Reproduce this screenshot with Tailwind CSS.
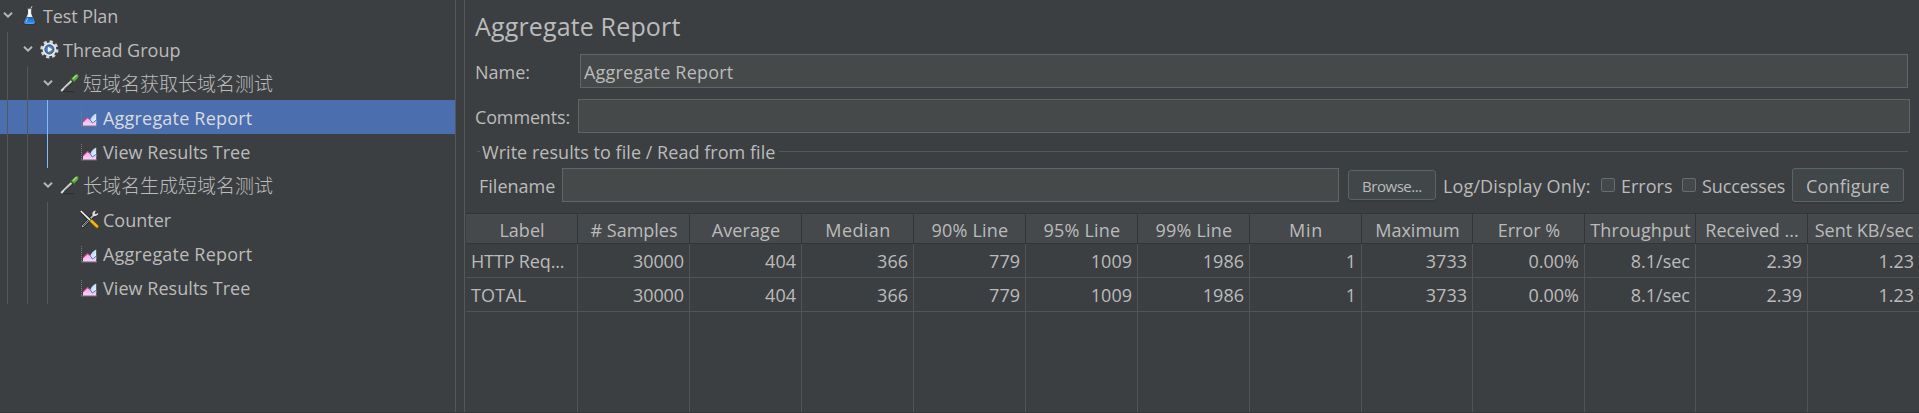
<!DOCTYPE html>
<html lang="en">
<head>
<meta charset="utf-8">
<title>Test Plan</title>
<script src="https://cdn.jsdelivr.net/npm/@tailwindcss/browser@4"></script>
</head>
<body class="bg-[#3c3f41]">
<svg class="absolute size-0">
  <defs>
    <linearGradient id="gGlass" x1="0" x2="1" y1="0" y2="0"><stop offset="0" stop-color="#8fa3b5"/><stop offset=".5" stop-color="#ffffff"/><stop offset="1" stop-color="#a8b6c4"/></linearGradient>
    <linearGradient id="gLiquid" x1="0" x2="0" y1="0" y2="1"><stop offset="0" stop-color="#1c5fb8"/><stop offset="1" stop-color="#2f9bff"/></linearGradient>
    <linearGradient id="gSky" x1="0" x2="1" y1="0" y2="1"><stop offset="0" stop-color="#8ec2ef"/><stop offset="1" stop-color="#ffffff"/></linearGradient>
    <linearGradient id="gPink" x1="0" x2="0" y1="0" y2="1"><stop offset="0" stop-color="#f5a8e6"/><stop offset="1" stop-color="#fbd0f6"/></linearGradient>
    <radialGradient id="gCore"><stop offset="0" stop-color="#9ec2ee"/><stop offset="1" stop-color="#2c5c9e"/></radialGradient>
  </defs>
  <symbol id="chevron" viewBox="0 0 10 8"><path d="M1 1.8 L5 5.6 L9 1.8" fill="none" stroke="#b4b7b9" stroke-width="2"/></symbol>
  <symbol id="flask" viewBox="0 0 20 20">
    <ellipse cx="9.5" cy="18.6" rx="6.6" ry="1" fill="#2a2d2f"/>
    <path d="M8 4 h3.2 v4.5 L14.6 17 Q15 18.6 13.4 18.7 H5.6 Q4 18.6 4.4 17 L8 8.5z" fill="url(#gGlass)"/>
    <path d="M6.6 12 H12.6 L14.6 17 Q15 18.6 13.4 18.7 H5.6 Q4 18.6 4.4 17z" fill="url(#gLiquid)"/>
    <path d="M7.8 4.2 h3.6 M11 3.4 L12 1.2" stroke="#c7ccd0" stroke-width="1" fill="none"/>
    <path d="M7.6 13 L6.2 17" stroke="#8fcaff" stroke-width="1"/>
  </symbol>
  <symbol id="gear" viewBox="0 0 20 20">
    <circle cx="9.4" cy="10.4" r="7.7" fill="none" stroke="#d3d5d7" stroke-width="2.8" stroke-dasharray="3.2 2.848"/>
    <circle cx="9.4" cy="10.4" r="6.9" fill="#e6e7e9"/>
    <circle cx="9.4" cy="10.4" r="4.6" fill="url(#gCore)" stroke="#39597f" stroke-width=".9"/>
    <path d="M8 7.8 L12.2 10.4 L8 13z" fill="#f2f7ff"/>
  </symbol>
  <symbol id="dropper" viewBox="0 0 20 20">
    <path d="M3 18.6 H14" stroke="#26292b" stroke-width="1.2" opacity=".7"/>
    <path d="M1.4 17.6 L3.2 14.2 L11 6.4 L13.6 9 L5.8 16.4z" fill="#2b2e30"/>
    <path d="M1.2 18 L4.2 15 L11.6 7.8" fill="none" stroke="#d6d9da" stroke-width="2"/>
    <path d="M4 15.8 L12.4 8.6" fill="none" stroke="#7d8184" stroke-width=".9"/>
    <path d="M10 5 L14.8 9.8" stroke="#2f5f1e" stroke-width="1.8"/>
    <path d="M11.4 6 L13.8 3.2 Q16.4 .6 18 1.6 Q19.2 3 17.4 5.6 L14.4 8.6z" fill="#5fa83f"/>
    <path d="M13.2 5.4 L16.2 2.6" stroke="#a9dc8c" stroke-width="1.4" stroke-linecap="round"/>
  </symbol>
  <symbol id="chart" viewBox="0 0 20 20">
    <path d="M1.5 3 V19" stroke="#77797b" stroke-width="1" stroke-dasharray="1 1"/>
    <path d="M1 18.9 H17" stroke="#7d7f81" stroke-width="1"/>
    <path d="M9.6 15.6 Q10.2 9.4 16.2 6.6 V16z" fill="url(#gSky)"/>
    <path d="M3 18.4 V15 L7.6 10.4 L10 12.4 L12.4 16 L16.2 13.6 V18.4z" fill="url(#gPink)"/>
    <path d="M3 14.8 L7.4 10.6 L9.8 12.2" fill="none" stroke="#d2418c" stroke-width="1.1"/>
    <path d="M9.8 12.2 L12.4 16 L16.2 13.2" fill="none" stroke="#4b7fc4" stroke-width="1"/>
  </symbol>
  <symbol id="tools" viewBox="0 0 20 20">
    <path d="M2.6 17.4 L13.6 6.4" stroke="#222426" stroke-width="3.6" stroke-linecap="round"/>
    <path d="M2.6 17.4 L13.6 6.4" stroke="#b3b6b8" stroke-width="1.8" stroke-linecap="round"/>
    <path d="M3 17 L11 9" stroke="#3b3e40" stroke-width=".9"/>
    <path d="M15.8 1.6 Q12 2 12.4 6 Q14 8.6 18 5.6 L18.2 4 L15.6 5.2 L14.6 4.2z" fill="#dfe1e2"/>
    <path d="M1 2.4 L10.2 11.4" stroke="#222426" stroke-width="3"/>
    <path d="M.8 2 L10.4 11.4" stroke="#f0f1f2" stroke-width="1.7"/>
    <path d="M11.4 12 L17.2 17.6" stroke="#7a5600" stroke-width="3.6" stroke-linecap="round"/>
    <path d="M11.4 12 L17 17.4" stroke="#f5b80e" stroke-width="2.5" stroke-linecap="round"/>
  </symbol>
</svg>

<div class="flex h-[413px] w-[1919px] overflow-hidden border-b border-[#333638] bg-[#3c3f41] font-['Open_Sans','Noto_Sans_CJK_SC',sans-serif] text-[18px] whitespace-nowrap text-[#bbbbbb]">

  <!-- Test tree -->
  <nav class="relative w-[456px] shrink-0 border-r border-[#555759]">
    <ul class="-mt-0.5 leading-[36px]">
      <li class="flex h-[34px] items-center pl-[3px]"><svg class="h-2 w-[10px] shrink-0"><use href="#chevron"/></svg><svg class="ml-[7px] size-5 shrink-0"><use href="#flask"/></svg><span class="ml-[3px] h-[34px] tracking-[-0.1px]">Test Plan</span></li>
      <li class="flex h-[34px] items-center pl-[23px]"><svg class="h-2 w-[10px] shrink-0"><use href="#chevron"/></svg><svg class="ml-[7px] size-5 shrink-0"><use href="#gear"/></svg><span class="ml-[3px] h-[34px]">Thread Group</span></li>
      <li class="flex h-[34px] items-center pl-[43px]"><svg class="h-2 w-[10px] shrink-0"><use href="#chevron"/></svg><svg class="ml-[7px] size-5 shrink-0"><use href="#dropper"/></svg><span class="ml-[3px] h-[34px] text-[19px] leading-[37px] font-light">短域名获取长域名测试</span></li>
      <li class="flex h-[34px] items-center bg-[#4b6eaf] pl-20"><svg class="size-5 shrink-0"><use href="#chart"/></svg><span class="ml-[3px] h-[34px] tracking-[0.2px] text-[#d8dbe0]">Aggregate Report</span></li>
      <li class="flex h-[34px] items-center pl-20"><svg class="size-5 shrink-0"><use href="#chart"/></svg><span class="ml-[3px] h-[34px] tracking-[0.05px]">View Results Tree</span></li>
      <li class="flex h-[34px] items-center pl-[43px]"><svg class="h-2 w-[10px] shrink-0"><use href="#chevron"/></svg><svg class="ml-[7px] size-5 shrink-0"><use href="#dropper"/></svg><span class="ml-[3px] h-[34px] text-[19px] leading-[37px] font-light">长域名生成短域名测试</span></li>
      <li class="flex h-[34px] items-center pl-20"><svg class="size-5 shrink-0"><use href="#tools"/></svg><span class="ml-[3px] h-[34px]">Counter</span></li>
      <li class="flex h-[34px] items-center pl-20"><svg class="size-5 shrink-0"><use href="#chart"/></svg><span class="ml-[3px] h-[34px] tracking-[0.2px]">Aggregate Report</span></li>
      <li class="flex h-[34px] items-center pl-20"><svg class="size-5 shrink-0"><use href="#chart"/></svg><span class="ml-[3px] h-[34px] tracking-[0.05px]">View Results Tree</span></li>
    </ul>
    <!-- Indent guides over the rows -->
    <i class="absolute top-8 left-[7px] h-[272px] w-px bg-[#555759]"></i>
    <i class="absolute top-[66px] left-[27px] h-[238px] w-px bg-[#555759]"></i>
    <i class="absolute top-[100px] left-[47px] h-[68px] w-px bg-[#7cbdfa]"></i>
    <i class="absolute top-[202px] left-[47px] h-[102px] w-px bg-[#555759]"></i>
  </nav>

  <!-- Report panel -->
  <main class="ml-2 flex w-[1455px] shrink-0 flex-col border-l border-[#555759]">
    <h1 class="h-[54px] pl-[10px] text-[25px] leading-[53px] tracking-[0.15px]">Aggregate Report</h1>

    <div class="flex h-[34px] pl-[10px] leading-[36px]">
      <label class="w-[105px]">Name:</label>
      <div class="h-[34px] w-[1328px] border border-[#646464] bg-[#45494a] pl-[3px] leading-[34px] tracking-[0.2px]">Aggregate Report</div>
    </div>
    <div class="mt-[11px] flex h-[34px] pl-[10px] leading-[36px]">
      <label class="w-[103px] tracking-[-0.15px]">Comments:</label>
      <div class="h-[34px] w-[1332px] border border-[#646464] bg-[#45494a]"></div>
    </div>

    <div class="mt-[5px] flex h-[27px] w-[1443px] items-center pl-3">
      <i class="h-px w-[3px] bg-[#555759]"></i>
      <span class="ml-[2px] h-[27px] leading-[29px] tracking-[0.04px]">Write results to file / Read from file</span>
      <i class="ml-1 h-px grow bg-[#555759]"></i>
    </div>

    <div class="mt-[3px] flex h-[34px] pl-[14px] leading-[36px]">
      <label class="w-[83px]">Filename</label>
      <div class="h-[34px] w-[777px] border border-[#646464] bg-[#45494a]"></div>
      <div class="mt-0.5 ml-[9px] h-[30px] w-[88px] rounded-[3px] border border-[#5e6263] bg-[#414749] pl-[13px] text-[15px] leading-[30px] tracking-[-0.45px] shadow-[0_2px_0_#363a3b]">Browse...</div>
      <span class="ml-[7px] w-[158px] tracking-[0.13px]">Log/Display Only:</span>
      <i class="mt-[10px] size-[14px] rounded-[2px] border border-[#6b6b6b] bg-[#43494a]"></i>
      <span class="ml-[6px] w-[61px]">Errors</span>
      <i class="mt-[10px] size-[14px] rounded-[2px] border border-[#6b6b6b] bg-[#43494a]"></i>
      <span class="ml-[6px] w-[90px] tracking-[-0.1px]">Successes</span>
      <div class="h-[34px] w-[112px] rounded-[3px] border border-[#5e6263] bg-[#414749] pl-[13px] leading-[34px] tracking-[0.2px] shadow-[0_2px_0_#363a3b]">Configure</div>
    </div>

    <div class="mt-[11px] ml-px flex grow flex-col">
      <div class="grid h-[31px] shrink-0 grid-cols-[repeat(8,112px)_111px_112px_111px_112px_111px] border-y border-[#333638] bg-[#45494b] text-center leading-[32px] *:h-[29px] *:border-r *:border-[#333638] *:pl-px">
        <div>Label</div><div>#&nbsp;Samples</div><div class="tracking-[0.1px]">Average</div><div class="tracking-[0.4px]">Median</div><div class="tracking-[0.2px]">90% Line</div><div class="tracking-[0.2px]">95% Line</div><div class="tracking-[0.2px]">99% Line</div><div class="tracking-[0.7px]">Min</div><div>Maximum</div><div>Error %</div><div class="tracking-[0.1px]">Throughput</div><div>Received ...</div><div class="border-r-0!">Sent KB/sec</div>
      </div>
      <div class="grid h-[34px] shrink-0 grid-cols-[repeat(8,112px)_111px_112px_111px_112px_111px] border-b border-[#505456] text-right leading-[34px] *:h-[33px] *:border-r *:border-[#505456] *:pr-[5px]">
        <div class="pl-[5px] text-left tracking-[-0.15px]">HTTP Req...</div><div class="tracking-[-0.1px]">30000</div><div>404</div><div>366</div><div>779</div><div>1009</div><div>1986</div><div>1</div><div>3733</div><div>0.00%</div><div>8.1/sec</div><div>2.39</div><div class="border-r-0!">1.23</div>
      </div>
      <div class="grid h-[34px] shrink-0 grid-cols-[repeat(8,112px)_111px_112px_111px_112px_111px] border-b border-[#505456] text-right leading-[34px] *:h-[33px] *:border-r *:border-[#505456] *:pr-[5px]">
        <div class="pl-[5px] text-left tracking-[0.2px]">TOTAL</div><div class="tracking-[-0.1px]">30000</div><div>404</div><div>366</div><div>779</div><div>1009</div><div>1986</div><div>1</div><div>3733</div><div>0.00%</div><div>8.1/sec</div><div>2.39</div><div class="border-r-0!">1.23</div>
      </div>
      <div class="grid grow grid-cols-[repeat(8,112px)_111px_112px_111px_112px_111px] *:border-r *:border-[#505456]">
        <div></div><div></div><div></div><div></div><div></div><div></div><div></div><div></div><div></div><div></div><div></div><div></div><div class="border-r-0!"></div>
      </div>
    </div>
  </main>
</div>
</body>
</html>
